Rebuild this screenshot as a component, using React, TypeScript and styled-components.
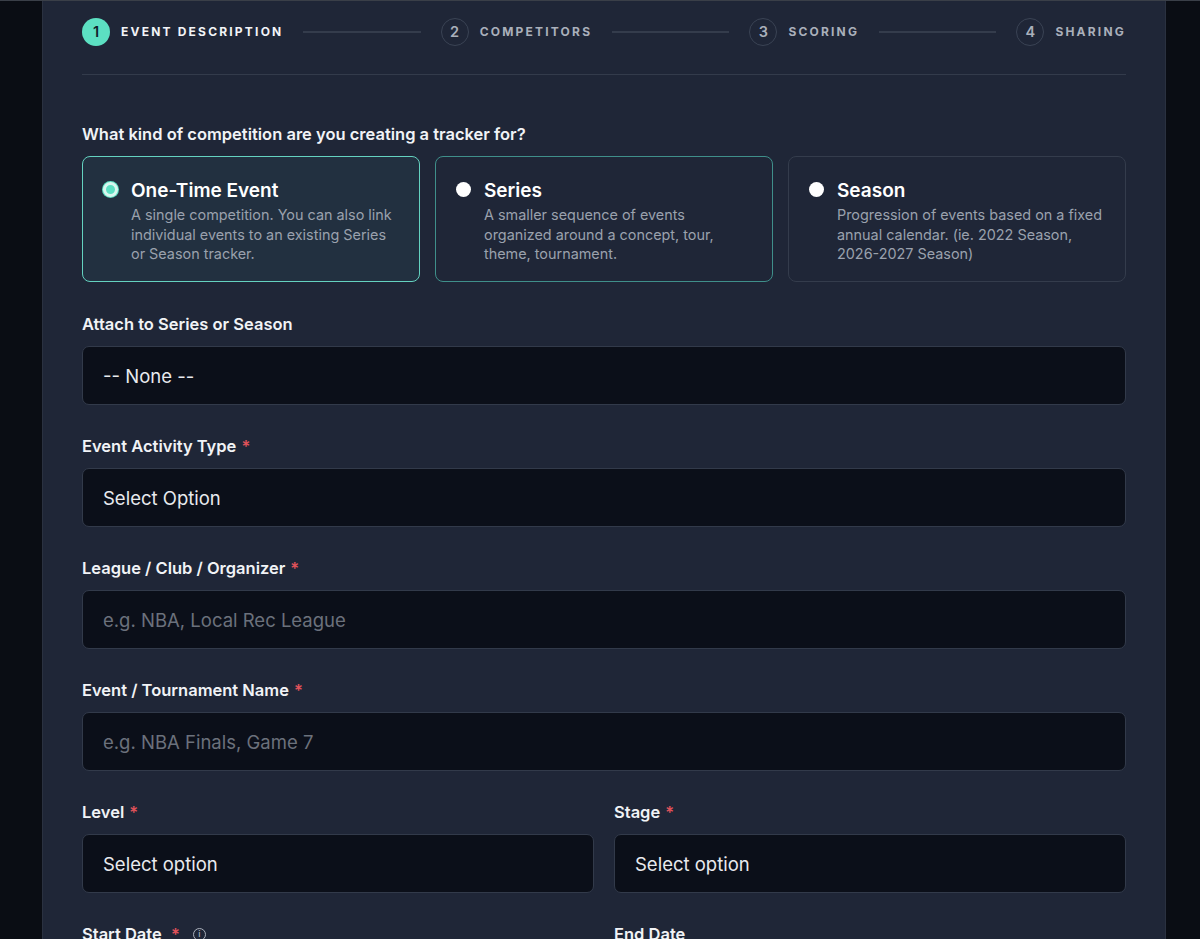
import React from "react";
import styled, { createGlobalStyle } from "styled-components";

const G = createGlobalStyle`
  html, body { margin: 0; background: #0a0d14; font-family: Inter, "Noto Sans", sans-serif; }
  * { box-sizing: border-box; }
`;
const Page = styled.div`display:flex;justify-content:flex-start;padding-left:42px;height:939px;overflow:hidden;border-top:1px solid #3a3f48;`;
const Panel = styled.div`width:1124px;background:#1f2637;padding:0 39px;border-left:1px solid #2a3140;border-right:1px solid #2a3140;`;
const Stepper = styled.div`display:flex;align-items:center;border-bottom:1px solid #333b4b;margin-bottom:49px;height:74px;padding-bottom:12px;`;
const Step = styled.div`display:flex;align-items:center;gap:11px;`;
const Num = styled.div<{ $a?: boolean }>`width:28px;height:28px;border-radius:50%;display:flex;align-items:center;justify-content:center;font-size:14.5px;font-weight:600;
  ${p => p.$a ? "background:#5ce0c2;color:#10202a;" : "border:1px solid #3a4354;color:#aab0bb;"}`;
const SLabel = styled.div<{ $a?: boolean }>`font-size:12px;font-weight:700;letter-spacing:2.2px;color:${p => p.$a ? "#f2f4f7" : "#aab0bb"};`;
const Line = styled.div`flex:1;height:2px;background:#343c4c;margin:0 20px;`;
const Q = styled.div`color:#f1f3f6;font-size:16.5px;font-weight:600;margin-bottom:12px;`;
const Cards = styled.div`display:grid;grid-template-columns:1fr 1fr 1fr;gap:15px;margin-bottom:32px;`;
const Card = styled.div<{ $b: string; $bg: string }>`height:126px;border:1.5px solid ${p => p.$b};background:${p => p.$bg};border-radius:8px;padding:24px 20px;display:flex;gap:13px;`;
const Radio = styled.div<{ $on?: boolean }>`width:15px;height:15px;border-radius:50%;flex:none;margin-top:1px;
  ${p => p.$on ? "background:#5ce0c2;border:3px solid #d8f7ef;box-shadow:0 0 0 1px #5ce0c2;" : "background:#fff;"}`;
const CT = styled.div`color:#fff;font-size:19px;font-weight:600;line-height:20px;margin-bottom:4px;`;
const CD = styled.div`color:#9aa1ad;font-size:14.4px;line-height:19.5px;`;
const Field = styled.div`margin-bottom:31px;`;
const Label = styled.div`color:#f1f3f6;font-size:16.5px;font-weight:600;margin-bottom:12px;line-height:20px;display:flex;align-items:center;gap:5px;`;
const Req = styled.span`color:#e0525a;`;
const Input = styled.div<{ $ph?: boolean }>`height:59px;background:#0b0f19;border:1px solid #323a4a;border-radius:7px;padding:0 20px;display:flex;align-items:center;font-size:18.5px;color:${p => p.$ph ? "#6b717c" : "#e8eaee"};`;
const Row = styled.div`display:grid;grid-template-columns:1fr 1fr;gap:20px;`;
const Info = styled.span`display:inline-flex;width:13px;height:13px;border:1px solid #aab0bb;border-radius:50%;font-size:9px;color:#aab0bb;align-items:center;justify-content:center;margin-left:8px;font-weight:500;`;

const steps = ["EVENT DESCRIPTION", "COMPETITORS", "SCORING", "SHARING"];
const cards = [
  { t: "One-Time Event", d: "A single competition. You can also link individual events to an existing Series or Season tracker.", b: "#64d2c0", bg: "#223040", on: true },
  { t: "Series", d: "A smaller sequence of events organized around a concept, tour, theme, tournament.", b: "#3f8f8a", bg: "#1f2637" },
  { t: "Season", d: "Progression of events based on a fixed annual calendar. (ie. 2022 Season, 2026-2027 Season)", b: "#343c4c", bg: "#1f2637" },
];

export default function App() {
  return (
    <Page>
      <G />
      <Panel>
        <Stepper>
          {steps.map((s, i) => (
            <React.Fragment key={s}>
              {i > 0 && <Line />}
              <Step><Num $a={i === 0}>{i + 1}</Num><SLabel $a={i === 0}>{s}</SLabel></Step>
            </React.Fragment>
          ))}
        </Stepper>
        <Q>What kind of competition are you creating a tracker for?</Q>
        <Cards>
          {cards.map(c => (
            <Card key={c.t} $b={c.b} $bg={c.bg}>
              <Radio $on={c.on} />
              <div><CT>{c.t}</CT><CD>{c.d}</CD></div>
            </Card>
          ))}
        </Cards>
        <Field><Label>Attach to Series or Season</Label><Input>-- None --</Input></Field>
        <Field><Label>Event Activity Type <Req>*</Req></Label><Input>Select Option</Input></Field>
        <Field><Label>League / Club / Organizer <Req>*</Req></Label><Input $ph>e.g. NBA, Local Rec League</Input></Field>
        <Field><Label>Event / Tournament Name <Req>*</Req></Label><Input $ph>e.g. NBA Finals, Game 7</Input></Field>
        <Row>
          <Field><Label>Level <Req>*</Req></Label><Input>Select option</Input></Field>
          <Field><Label>Stage <Req>*</Req></Label><Input>Select option</Input></Field>
        </Row>
        <Row>
          <Field><Label>Start Date <Req>&nbsp;*</Req><Info>i</Info></Label></Field>
          <Field><Label>End Date</Label></Field>
        </Row>
      </Panel>
    </Page>
  );
}
